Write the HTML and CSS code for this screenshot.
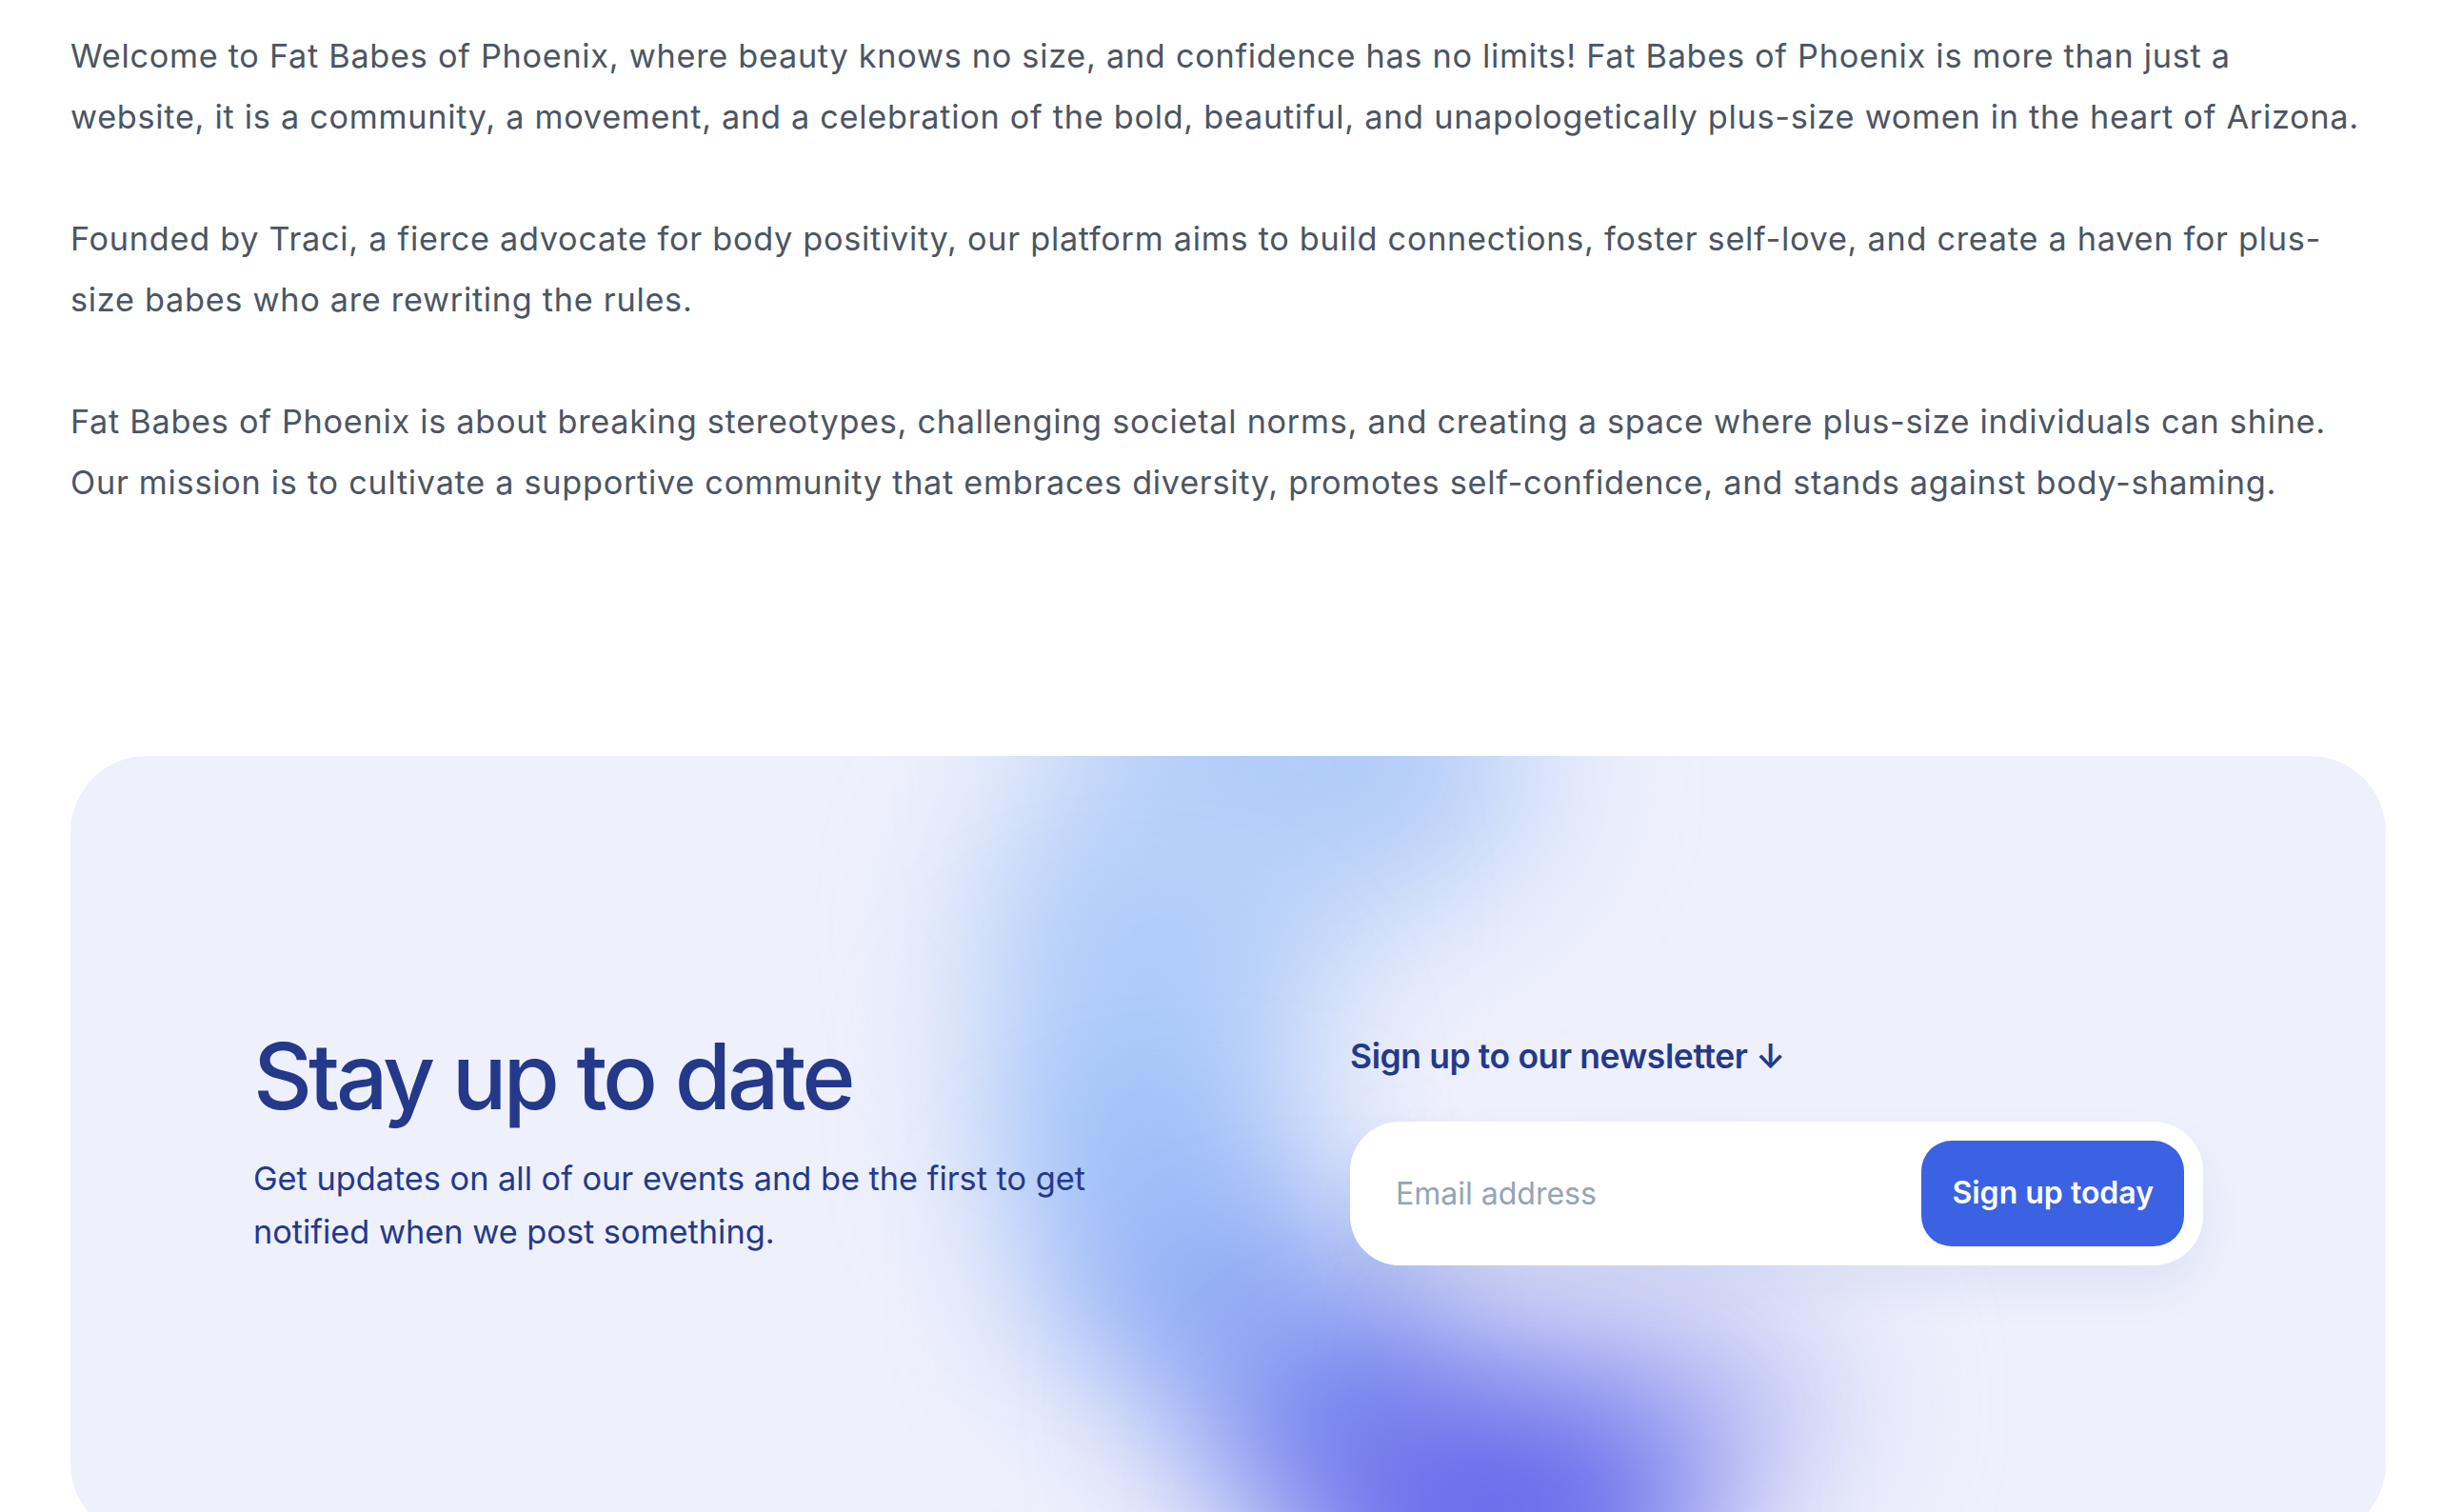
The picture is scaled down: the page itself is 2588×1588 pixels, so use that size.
FILE: index.html
```html
<!DOCTYPE html>
<html lang="en">
<head>
<meta charset="utf-8">
<title>Fat Babes of Phoenix</title>
<link rel="stylesheet" href="styles.css">
</head>
<body>
<main class="page">
  <section class="intro">
    <p>Welcome to Fat Babes of Phoenix, where beauty knows no size, and confidence has no limits! Fat Babes of Phoenix is more than just a website, it is a community, a movement, and a celebration of the bold, beautiful, and unapologetically plus-size women in the heart of Arizona.</p>
    <p>Founded by Traci, a fierce advocate for body positivity, our platform aims to build connections, foster self-love, and create a haven for plus-size babes who are rewriting the rules.</p>
    <p>Fat Babes of Phoenix is about breaking stereotypes, challenging societal norms, and creating a space where plus-size individuals can shine. Our mission is to cultivate a supportive community that embraces diversity, promotes self-confidence, and stands against body-shaming.</p>
  </section>

  <section class="newsletter">
    <div class="blobs" aria-hidden="true">
      <span class="blob b1"></span>
      <span class="blob b2"></span>
      <span class="blob b3"></span>
      <span class="blob b4"></span>
      <span class="blob b5"></span>
      <span class="blob b7"></span>
      <span class="blob b6"></span>
    </div>
    <div class="news-grid">
      <div class="news-copy">
        <h2 class="news-title">Stay up to date</h2>
        <p class="news-text">Get updates on all of our events and be the first to get notified when we post something.</p>
      </div>
      <div class="news-form-col">
        <h3 class="news-label">Sign up to our newsletter <span class="arrow">↓</span></h3>
        <form class="news-form">
          <input class="news-input" type="email" placeholder="Email address">
          <button class="news-button" type="button">Sign up today</button>
        </form>
      </div>
    </div>
  </section>
</main>
</body>
</html>
```

FILE: styles.css
```css
* { box-sizing: border-box; }

html, body {
  margin: 0;
  padding: 0;
  background: #ffffff;
}

body {
  font-family: "Inter", "Noto Sans", sans-serif;
  overflow: hidden;
}

.page {
  padding: 27px 82px 0 74px;
}

.intro {
  max-width: 2411px;
  margin-bottom: 255px;
}

.intro p {
  margin: 0 0 64px;
  font-size: 34.25px;
  line-height: 64px;
  letter-spacing: 0.72px;
  color: #4b5563;
}

.newsletter {
  position: relative;
  overflow: hidden;
  background: #eef0fc;
  border-radius: 80px;
  padding: 288px 192px 288px;
  isolation: isolate;
}

.blobs {
  position: absolute;
  inset: 0;
  z-index: -1;
  pointer-events: none;
}

.blob {
  position: absolute;
  border-radius: 50%;
  filter: blur(80px);
}

.b1 { left: 1040px; top: -150px; width: 500px; height: 320px; background: #b0cbf8; }
.b2 { left: 960px;  top: 30px;   width: 360px; height: 300px; background: #b2cef9; }
.b3 { left: 970px;  top: 220px;  width: 300px; height: 320px; background: #a0c3f9; }
.b4 { left: 1030px; top: 430px;  width: 320px; height: 240px; background: #8eaef6; }
.b5 { left: 1170px; top: 560px;  width: 340px; height: 240px; background: #7a8ef0; }
.b7 { left: 1480px; top: 560px;  width: 380px; height: 240px; background: #c0c5f5; }
.b6 { left: 1280px; top: 650px;  width: 440px; height: 280px; background: #6266ea; }

.news-grid {
  display: grid;
  grid-template-columns: 1fr 1fr;
  column-gap: 256px;
  align-items: start;
}

.news-title {
  margin: 0;
  font-size: 96px;
  line-height: 96px;
  font-weight: 500;
  letter-spacing: -0.042em;
  color: #24398a;
}

.news-text {
  margin: 32px 0 0;
  font-size: 34.3px;
  line-height: 56px;
  color: #24398a;
}

.news-label {
  margin: 0;
  font-size: 35.4px;
  line-height: 56px;
  font-weight: 600;
  letter-spacing: -0.01em;
  color: #24398a;
}

.news-form {
  margin-top: 40px;
  display: flex;
  align-items: center;
  gap: 20px;
  background: #ffffff;
  border-radius: 52px;
  padding: 20px;
  box-shadow: 0 24px 48px rgba(30, 58, 138, 0.07);
}

.news-input {
  flex: 1;
  min-width: 0;
  border: 0;
  outline: none;
  background: transparent;
  font-family: inherit;
  font-size: 32px;
  line-height: 48px;
  padding: 0 0 0 28px;
  color: #1f2937;
}

.news-input::placeholder {
  color: #94a3b8;
}

.news-button {
  border: 0;
  background: #3a62e3;
  color: #ffffff;
  font-family: inherit;
  font-size: 32px;
  line-height: 48px;
  font-weight: 600;
  padding: 31px 32px 32px;
  border-radius: 32px;
  white-space: nowrap;
}
```
